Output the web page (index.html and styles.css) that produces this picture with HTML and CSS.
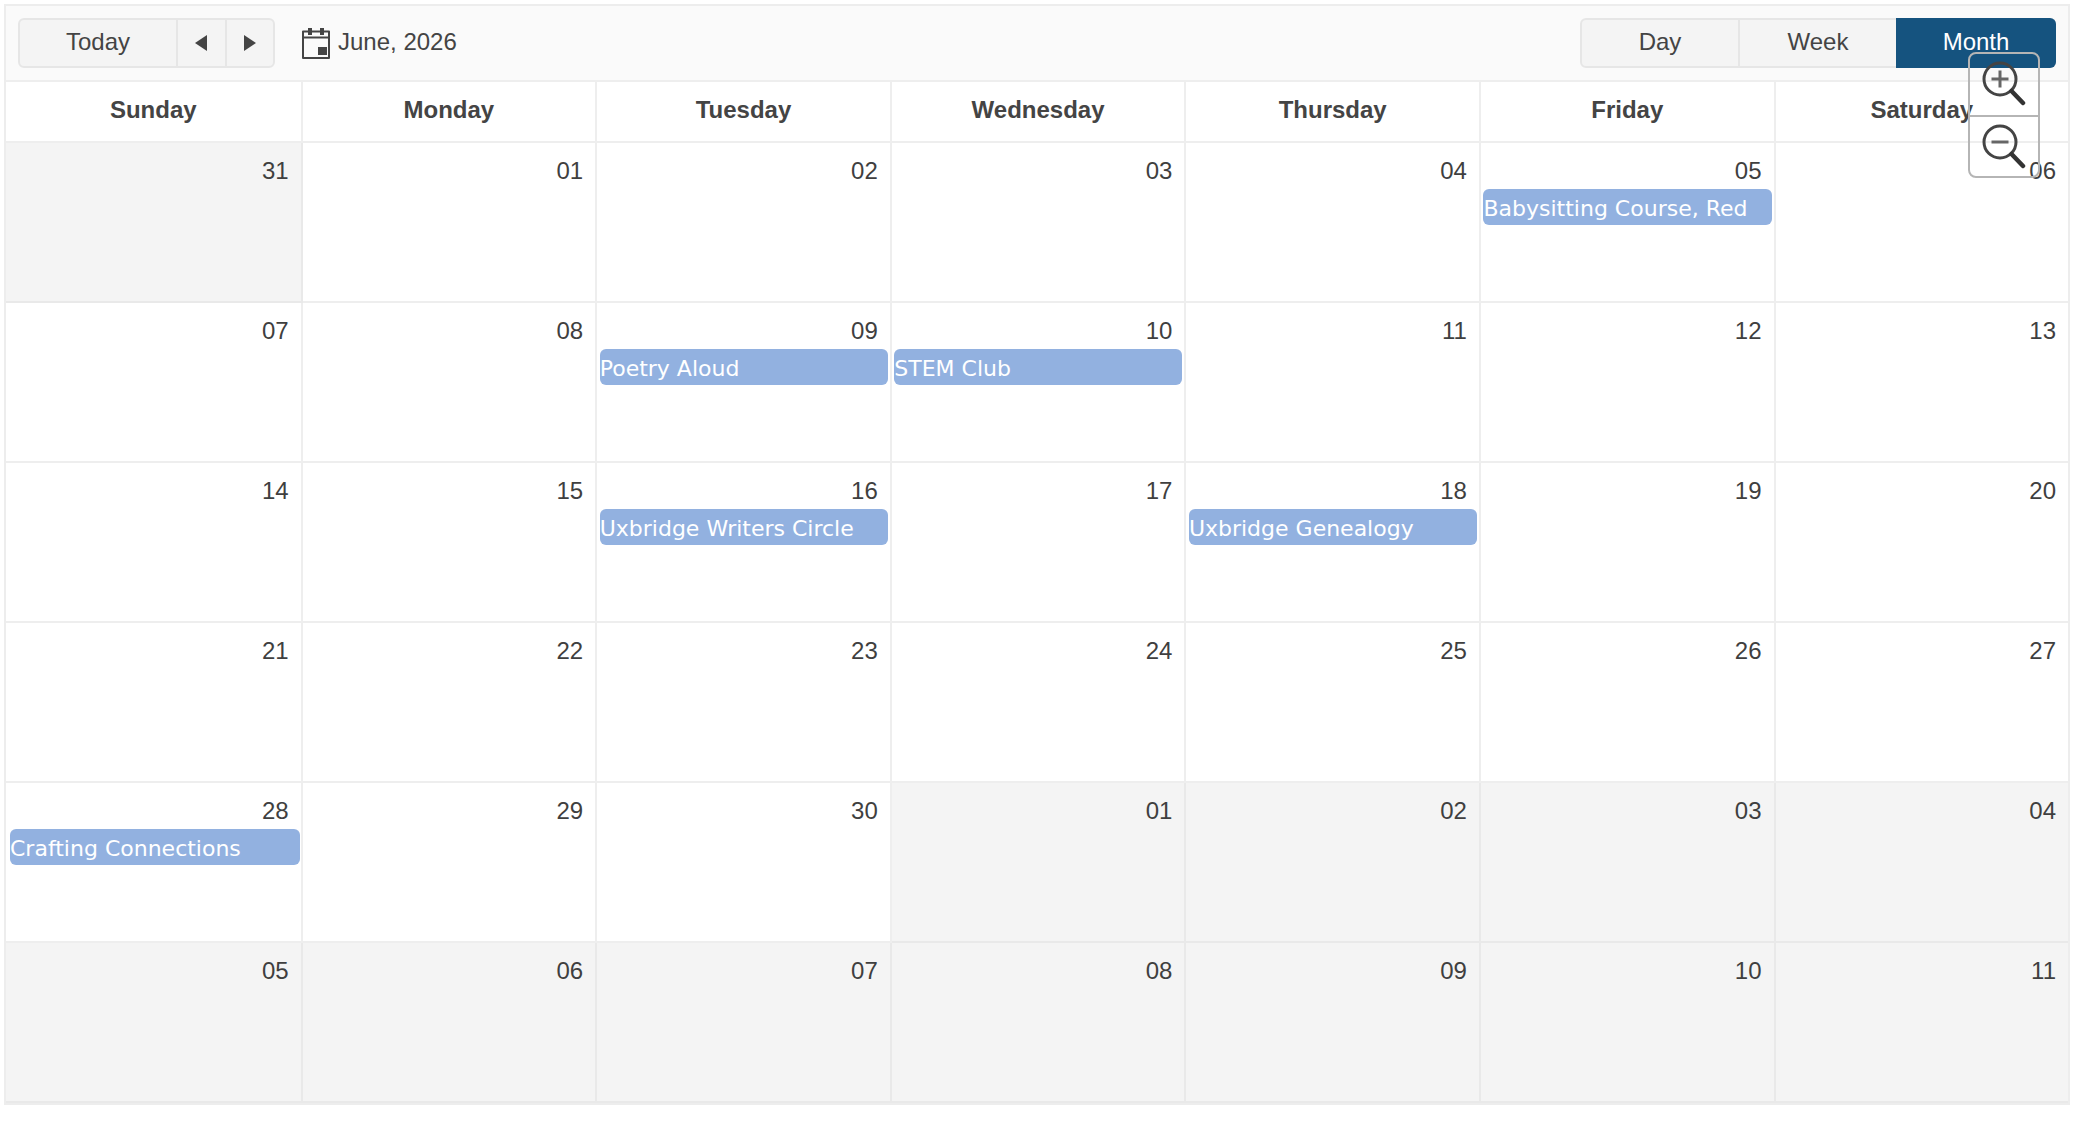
FILE: index.html
```html
<!DOCTYPE html>
<html lang="en">
<head>
<meta charset="utf-8">
<title>Calendar</title>
<link rel="stylesheet" href="styles.css">
</head>
<body>
<div class="scheduler">
  <div class="toolbar">
    <div class="btn-group">
      <button class="btn btn-today">Today</button>
      <button class="btn btn-prev" aria-label="Previous"><svg width="12" height="16" viewBox="0 0 12 16"><path d="M12 0V16L0 8Z"/></svg></button>
      <button class="btn btn-next" aria-label="Next"><svg width="12" height="16" viewBox="0 0 12 16"><path d="M0 0V16L12 8Z"/></svg></button>
    </div>
    <div class="date-label">
      <svg class="cal-icon" width="28" height="32" viewBox="0 0 28 32"><path class="cal-line" d="M1 4.500H27V31H1Z M1 10.500H27"/><path class="cal-fill" d="M6 1H10V8H6Z M18 1H22V8H18Z M16 20H25V28H16Z"/></svg>
      <span>June, 2026</span>
    </div>
    <div class="btn-group views">
      <button class="btn btn-day">Day</button>
      <button class="btn btn-week">Week</button>
      <button class="btn btn-month">Month</button>
    </div>
  </div>
  <div class="grid header-row">
    <div class="head">Sunday</div><div class="head">Monday</div><div class="head">Tuesday</div><div class="head">Wednesday</div><div class="head">Thursday</div><div class="head">Friday</div><div class="head">Saturday</div>
  </div>
  <div class="grid week">
    <div class="cell other"><div class="num">31</div></div>
    <div class="cell"><div class="num">01</div></div>
    <div class="cell"><div class="num">02</div></div>
    <div class="cell"><div class="num">03</div></div>
    <div class="cell"><div class="num">04</div></div>
    <div class="cell"><div class="num">05</div><div class="event">Babysitting Course, Red</div></div>
    <div class="cell"><div class="num">06</div></div>
  </div>
  <div class="grid week">
    <div class="cell"><div class="num">07</div></div>
    <div class="cell"><div class="num">08</div></div>
    <div class="cell"><div class="num">09</div><div class="event">Poetry Aloud</div></div>
    <div class="cell"><div class="num">10</div><div class="event">STEM Club</div></div>
    <div class="cell"><div class="num">11</div></div>
    <div class="cell"><div class="num">12</div></div>
    <div class="cell"><div class="num">13</div></div>
  </div>
  <div class="grid week">
    <div class="cell"><div class="num">14</div></div>
    <div class="cell"><div class="num">15</div></div>
    <div class="cell"><div class="num">16</div><div class="event">Uxbridge Writers Circle</div></div>
    <div class="cell"><div class="num">17</div></div>
    <div class="cell"><div class="num">18</div><div class="event">Uxbridge Genealogy</div></div>
    <div class="cell"><div class="num">19</div></div>
    <div class="cell"><div class="num">20</div></div>
  </div>
  <div class="grid week">
    <div class="cell"><div class="num">21</div></div>
    <div class="cell"><div class="num">22</div></div>
    <div class="cell"><div class="num">23</div></div>
    <div class="cell"><div class="num">24</div></div>
    <div class="cell"><div class="num">25</div></div>
    <div class="cell"><div class="num">26</div></div>
    <div class="cell"><div class="num">27</div></div>
  </div>
  <div class="grid week">
    <div class="cell"><div class="num">28</div><div class="event event-first">Crafting Connections</div></div>
    <div class="cell"><div class="num">29</div></div>
    <div class="cell"><div class="num">30</div></div>
    <div class="cell other"><div class="num">01</div></div>
    <div class="cell other"><div class="num">02</div></div>
    <div class="cell other"><div class="num">03</div></div>
    <div class="cell other"><div class="num">04</div></div>
  </div>
  <div class="grid week">
    <div class="cell other"><div class="num">05</div></div>
    <div class="cell other"><div class="num">06</div></div>
    <div class="cell other"><div class="num">07</div></div>
    <div class="cell other"><div class="num">08</div></div>
    <div class="cell other"><div class="num">09</div></div>
    <div class="cell other"><div class="num">10</div></div>
    <div class="cell other"><div class="num">11</div></div>
  </div>
</div>
<div class="zoom-control">
  <button class="zoom-btn" aria-label="Zoom in"><svg width="67" height="61" viewBox="0 0 67 61"><circle class="lens" cx="30" cy="25" r="16"/><path class="mark" d="M21.500 25H38.500M30 16.500V33.500"/><path class="handle" d="M41.500 37L53 49"/></svg></button>
  <button class="zoom-btn zoom-out" aria-label="Zoom out"><svg width="67" height="61" viewBox="0 0 67 61"><circle class="lens" cx="30" cy="25" r="16"/><path class="mark" d="M21.500 25H38.500"/><path class="handle" d="M41.500 37L53 49"/></svg></button>
</div>
</body>
</html>
```
FILE: styles.css
```css
* { box-sizing: border-box; }
html, body { margin: 0; padding: 0; background: #fff; }
body { padding: 4px 6px 0 4px; font-family: "Liberation Sans", Arial, sans-serif; color: #444; }
.scheduler { border: 2px solid #ededed; height: 1101px; background: #fff; }
.toolbar { height: 76px; padding: 12px 12px 0 12px; display: flex; align-items: flex-start; background: #fafafa; border-bottom: 2px solid #eee; }
.btn-group { display: flex; height: 50px; border: 2px solid #e6e6e6; border-radius: 6px; background: #f4f4f4; overflow: hidden; }
.btn { display: flex; align-items: center; justify-content: center; height: 100%; padding: 0 0 3px; border: 0; border-right: 2px solid #e6e6e6; background: none; font: 24px "Liberation Sans", Arial, sans-serif; color: #444; }
.btn:last-child { border-right: 0; }
.btn-today { width: 158px; }
.btn-prev { width: 49px; padding: 0 1px 0 0; }
.btn-next { width: 46px; padding: 0 1px 0 0; }
.btn-prev svg, .btn-next svg { fill: #444; display: block; }
.date-label { display: flex; align-items: center; gap: 8px; height: 50px; margin-left: 27px; font-size: 24px; padding-bottom: 2px; }
.cal-icon { display: block; margin-top: 2px; }
.cal-line { fill: none; stroke: #444; stroke-width: 2; stroke-linejoin: round; }
.cal-fill { fill: #444; }
.views { margin-left: auto; overflow: visible; }
.btn-day { width: 158px; }
.btn-week { width: 156px; border-right: 0; }
.btn-month { width: 160px; margin: -2px -2px -2px 0; height: 50px; background: #15537f; color: #fff; border-radius: 0 6px 6px 0; }
.grid { display: grid; grid-template-columns: 296.600px repeat(5, 294.600px) 1fr; }
.header-row { height: 61px; }
.head { display: flex; align-items: center; justify-content: center; font-weight: bold; font-size: 24px; border-right: 2px solid #eee; border-bottom: 2px solid #eee; padding-bottom: 3px; }
.head:last-child, .cell:last-child { border-right: 0; }
.week { height: 160px; }
.cell { border-right: 2px solid #eee; border-bottom: 2px solid #eee; padding: 14px 0 0; overflow: hidden; }
.cell.other { background: #f4f4f4; border-color: #e9e9e9; }
.num { height: 28px; line-height: 28px; font-size: 24px; text-align: right; padding-right: 12px; color: #3f3f3f; }
.event { height: 36px; margin: 4px 2px 0 2.500px; border-radius: 6px; background: #92b1e0; color: #fff; font-family: "DejaVu Sans", sans-serif; font-size: 22px; line-height: 40px; white-space: nowrap; overflow: hidden; }
.event-first { margin-left: 4px; margin-right: 1px; }
.zoom-control { position: absolute; left: 1968px; top: 52px; width: 72px; height: 126px; display: flex; flex-direction: column; border: 2px solid #b5b5b5; border-radius: 8px; }
.zoom-btn { flex: 1; padding: 0; border: 0; background: none; display: block; }
.zoom-btn svg { display: block; filter: blur(0.4px); }
.zoom-out { border-top: 2px solid #b5b5b5; }
.lens { fill: none; stroke: #444; stroke-width: 3; }
.mark { fill: none; stroke: #666; stroke-width: 3; }
.handle { fill: none; stroke: #333; stroke-width: 4.500; stroke-linecap: round; }
```
